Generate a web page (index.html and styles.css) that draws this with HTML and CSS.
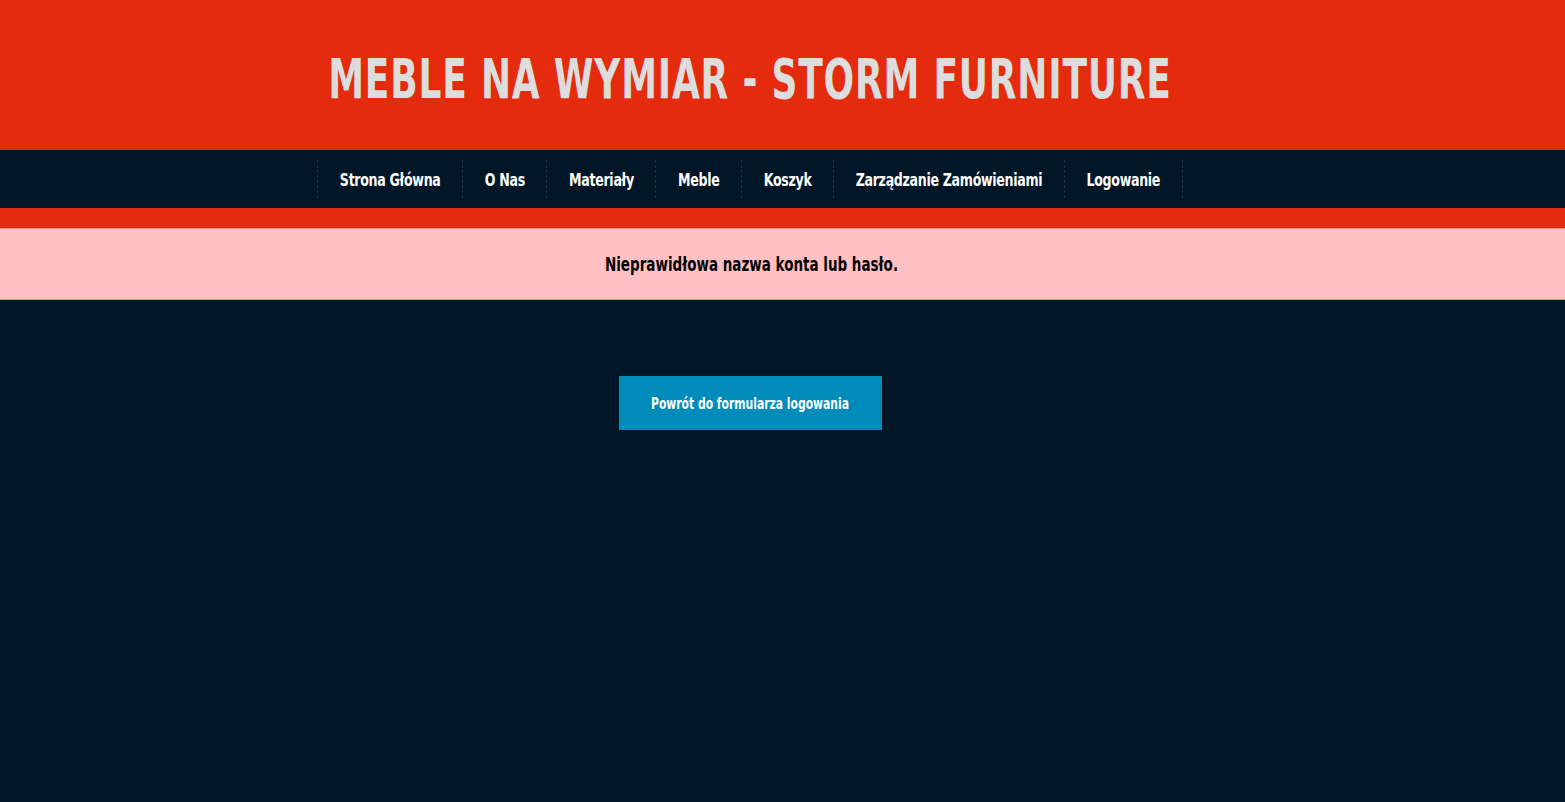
FILE: index.html
```html
<!DOCTYPE html>
<html lang="pl">
<head>
<meta charset="utf-8">
<title>Meble na wymiar - Storm Furniture</title>
<link rel="stylesheet" href="styles.css">
</head>
<body>
<header class="site-header">
  <div class="wrap header-wrap">
    <h1 class="site-title">Meble na wymiar - Storm Furniture</h1>
  </div>
</header>
<nav class="main-nav">
  <div class="wrap nav-wrap">
    <ul class="nav-list">
      <li class="nav-item"><a href="#">Strona Główna</a></li>
      <li class="nav-item"><a href="#">O Nas</a></li>
      <li class="nav-item"><a href="#">Materiały</a></li>
      <li class="nav-item"><a href="#">Meble</a></li>
      <li class="nav-item"><a href="#">Koszyk</a></li>
      <li class="nav-item"><a href="#">Zarządzanie Zamówieniami</a></li>
      <li class="nav-item"><a href="#">Logowanie</a></li>
    </ul>
  </div>
</nav>
<div class="red-strip"></div>
<div class="alert">
  <div class="wrap alert-wrap"><span class="alert-text">Nieprawidłowa nazwa konta lub hasło.</span></div>
</div>
<main class="content">
  <div class="wrap content-wrap">
    <a class="button" href="#"><span class="button-text">Powrót do formularza logowania</span></a>
  </div>
</main>
</body>
</html>
```

FILE: styles.css
```css
* { box-sizing: border-box; }
html, body {
  margin: 0;
  padding: 0;
  background: #011627;
  font-family: "DejaVu Sans", sans-serif;
  font-stretch: condensed;
  font-weight: bold;
}
.wrap {
  width: 1500px;
  height: 100%;
  display: flex;
  justify-content: center;
  align-items: center;
}
.site-header {
  background: #e52b0e;
  height: 150px;
}
.site-title {
  margin: 0;
  padding-top: 6px;
  color: #dddddd;
  text-transform: uppercase;
  font-size: 40px;
  letter-spacing: 0.8px;
  font-weight: bold;
  line-height: 1;
  transform: scaleY(1.36);
}
.main-nav {
  background: #011627;
  height: 58px;
}
.nav-list {
  list-style: none;
  margin: 0;
  padding: 0;
  display: flex;
  border-left: 1px dashed #163149;
}
.nav-item {
  border-right: 1px dashed #163149;
  height: 38px;
  display: flex;
  align-items: center;
}
.nav-item a {
  display: inline-block;
  color: #ffffff;
  text-decoration: none;
  font-size: 14px;
  padding: 1px 21.6px 0;
  letter-spacing: -0.3px;
  transform: scaleY(1.25);
}
.red-strip {
  background: #e52b0e;
  height: 20px;
}
.alert {
  background: #ffc0c3;
  border-top: 1px solid #f58f8f;
  border-bottom: 1px solid #f58f8f;
  height: 72px;
  color: #000000;
  font-size: 15px;
}
.alert-text {
  display: inline-block;
  padding-left: 3px;
  transform: scaleY(1.35);
}
.content {
  padding-top: 76px;
}
.content-wrap {
  height: auto;
}
.button {
  display: flex;
  align-items: center;
  justify-content: center;
  width: 263px;
  height: 54px;
  background: #008cba;
  color: #ffffff;
  text-decoration: none;
  font-size: 12px;
}
.button-text {
  display: inline-block;
  padding-top: 1px;
  transform: scaleY(1.3);
}
```
